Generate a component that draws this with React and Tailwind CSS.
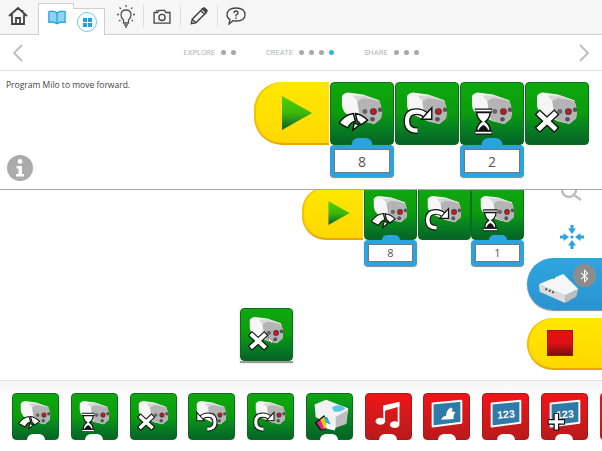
import { useId } from "react";

const Motor = () => (
  <g>
    <path d="M11 14 Q12 11 17 10 L33 12 L50 18 L53 28 L52 37 L45 43 L33 40 L15 32 Q11 28 11 22Z" fill="#f6f6f6" />
    <path d="M27 19 L33 14 L50 19 L53 28 L52 37 L45 43 L31 39 Q28 30 27 19Z" fill="#b4b4b4" />
    <path d="M22 13 L34 13 L49 18 L33 16 L27 19Z" fill="#d6d6d6" />
    <circle cx="35" cy="30" r="2.6" fill="#666" />
    <circle cx="44" cy="30" r="3.6" fill="#3c3c3c" />
    <circle cx="44" cy="30" r="2.5" fill="#e0101a" />
    <circle cx="51" cy="28" r="2.4" fill="#555" />
    <circle cx="43" cy="38" r="2.4" fill="#555" />
  </g>
);

const Outlined = ({ d, w = 5, cap = "square" }) => (
  <g fill="none" strokeLinecap={cap} strokeLinejoin="miter">
    <path d={d} stroke="#111" strokeWidth={w + 2.8} />
    <path d={d} stroke="#fff" strokeWidth={w} />
  </g>
);

const Gauge = () => (
  <g stroke="#111" strokeWidth="1.5" fill="#fff" strokeLinejoin="round">
    <path d="M8 42 Q14 33 23 32 L25 40 Q20 41 17 47Z" />
    <path d="M25 32 Q32 33 38 39 L31 44 Q29 41 27 40Z" />
    <path d="M24 42 L29 44 L22 50Z" />
  </g>
);

const RotateCw = () => (
  <g>
    <Outlined d="M22 50 Q11 50 11 40 Q11 30 21 30 Q27 30 31 34" w={4.4} cap="butt" />
    <path d="M37 26 V38 H26Z" fill="#fff" stroke="#111" strokeWidth="1.5" />
  </g>
);

const Hourglass = () => (
  <g>
    <path d="M14 29 H32 M14 52 H32" stroke="#111" strokeWidth="4.4" />
    <path d="M14.5 29 H31.5 M14.5 52 H31.5" stroke="#fff" strokeWidth="1.8" />
    <path d="M16 31 H30 Q30 37 25 40.5 Q30 44 30 50 H16 Q16 44 21 40.5 Q16 37 16 31Z" fill="#fff" stroke="#111" strokeWidth="1.5" />
    <path d="M17.5 50 Q20 45 23 44 Q26 45 28.5 50Z" fill="#111" />
  </g>
);

const Cross = () => <Outlined d="M14 33 L29 47 M29 33 L14 47" w={5} />;

const overlays = {
  gauge: <Gauge />,
  cw: <RotateCw />,
  ccw: <g transform="translate(48 0) scale(-1 1)"><RotateCw /></g>,
  hourglass: <Hourglass />,
  cross: <Cross />,
};

const MotorBlock = ({ icon, size, bump }) => (
  <div className={`relative shrink-0 rounded-sm border border-[#0b6b1e] bg-gradient-to-b from-[#0fa80f] via-[#0a9c0c] to-[#056326] ${size}`}>
    <svg viewBox="0 0 64 64" className="absolute inset-0 h-full w-full">
      <Motor />
      {overlays[icon]}
    </svg>
    {bump && <div className="absolute bottom-[-1px] left-1/2 h-[6px] w-[18px] -translate-x-1/2 rounded-t-full bg-white" />}
  </div>
);

const YellowPill = ({ className, children }) => (
  <div className={`border-b-2 border-[#e8a800] bg-gradient-to-b from-[#ffe800] to-[#ffd800] shadow-[inset_2px_0_0_#f3c200] ${className}`}>
    {children}
  </div>
);

const Play = ({ className }) => {
  const id = useId();
  return (
    <svg viewBox="0 0 30 34" className={className}>
      <defs>
        <linearGradient id={id} x1="0" y1="0" x2="0" y2="1">
          <stop offset="0" stopColor="#4fd000" />
          <stop offset="0.5" stopColor="#3cb808" />
          <stop offset="1" stopColor="#0a5f2a" />
        </linearGradient>
      </defs>
      <path d="M0 0 L30 17 L0 34Z" fill={`url(#${id})`} />
    </svg>
  );
};

const Param = ({ value, size, text, tab }) => (
  <div className={`relative shrink-0 rounded-sm bg-[#2aa3df] p-[4px] shadow-[0_1px_1px_#888] ${size}`}>
    <div className={`absolute left-1/2 -translate-x-1/2 rounded-t-full bg-[#2aa3df] ${tab}`} />
    <div className={`flex h-full items-center justify-center border border-[#777] bg-white font-['Open_Sans',sans-serif] text-[#555] ${text}`}>
      {value}
    </div>
  </div>
);

const RedBlock = ({ children }) => (
  <div className="relative h-[47px] w-[47px] shrink-0 rounded-sm border border-[#a81a1a] bg-gradient-to-b from-[#f01418] to-[#b81a1c]">
    <svg viewBox="0 0 47 47" className="absolute inset-0 h-full w-full">{children}</svg>
    <div className="absolute bottom-[-1px] left-1/2 h-[6px] w-[18px] -translate-x-1/2 rounded-t-full bg-white" />
  </div>
);

const Screen = ({ children }) => (
  <g>
    <path d="M9 10 L39 7 L39 30 L9 34Z" fill="#2f7ba8" stroke="#fff" strokeWidth="2" strokeLinejoin="round" />
    {children}
  </g>
);

const Num = () => (
  <text x="24" y="25" textAnchor="middle" fontSize="11" fontWeight="700" fill="#fff" fontFamily="Liberation Sans, sans-serif" transform="rotate(-5 24 22)">
    123
  </text>
);

const Dots = ({ count, active }) => (
  <div className="flex gap-[5px]">
    {Array.from({ length: count }).map((_, i) => (
      <span key={i} className={`h-[5px] w-[5px] rounded-full ${i === active ? "bg-[#2fb4e0]" : "bg-[#a8a8a8]"}`} />
    ))}
  </div>
);

const Step = ({ label, count, active, className }) => (
  <div className={`flex items-center gap-[6px] ${className}`}>
    <span className="text-[7.5px] text-[#b4b4b4]">{label}</span>
    <Dots count={count} active={active} />
  </div>
);

const Divider = () => <div className="h-[22px] w-px shrink-0 bg-[#dddddd]" />;

const App = () => {
  return (
    <div className="flex h-[451px] w-[602px] flex-col overflow-hidden bg-white font-['Roboto',sans-serif]">
      {/* Top toolbar */}
      <header className="flex h-[35px] shrink-0 items-end border-b border-[#cfcfcf] bg-[#f6f6f6] pl-[8px]">
        <svg viewBox="0 0 20 20" className="mb-[8px] h-[20px] w-[20px] shrink-0" fill="none" stroke="#444" strokeWidth="1.8">
          <path d="M1 10 L10 2 L19 10 M4 8.5 V18 H16 V8.5 M8 18 V12 H12 V18 M14.5 4 V7" />
        </svg>
        {/* Active tab steps down halfway across */}
        <div className="relative z-10 mb-[-1px] ml-[10px] flex shrink-0 items-end">
          <div className="h-[32px] w-[36px] border border-b-0 border-[#cfcfcf] bg-white pl-[9px] pt-[6px]">
            <svg viewBox="0 0 20 16" className="h-[15px] w-[18px]" fill="#8fd4f2" stroke="#22a3e0" strokeWidth="1.4">
              <path d="M10 3 Q6 0 1 1.5 V13.5 Q6 12 10 15 Q14 12 19 13.5 V1.5 Q14 0 10 3Z M10 3 V15" />
            </svg>
          </div>
          <div className="ml-[-1px] h-[27px] w-[32px] border-r border-t border-[#cfcfcf] bg-white pl-[4px] pt-[3px]">
            <div className="relative z-10 grid h-[20px] w-[20px] grid-cols-[4px_4px] place-content-center gap-[1px] rounded-full border border-[#6ccbf0] bg-white">
              <span className="h-[4px] w-[4px] bg-[#1f9fe0]" />
              <span className="h-[4px] w-[4px] bg-[#1f9fe0]" />
              <span className="h-[4px] w-[4px] bg-[#1f9fe0]" />
              <span className="h-[4px] w-[4px] bg-[#1f9fe0]" />
            </div>
          </div>
        </div>
        <div className="flex h-[34px] items-center pb-[2px]">
          <svg viewBox="0 0 20 24" className="ml-[11px] h-[24px] w-[20px]" fill="none" stroke="#555" strokeWidth="1.3">
            <path d="M10 6 Q5 6 5 11 Q5 14 7.5 16 V19 H12.5 V16 Q15 14 15 11 Q15 6 10 6Z M8 21 H12 M9 23 H11" />
            <path d="M10 1 V3.5 M3.5 3.5 L5 5 M16.5 3.5 L15 5 M1 10.5 H3 M17 10.5 H19 M3 17 L4.5 16 M17 17 L15.5 16" strokeDasharray="2 0.6" />
          </svg>
          <div className="ml-[7px]"><Divider /></div>
          <svg viewBox="0 0 20 17" className="ml-[9px] h-[15px] w-[18px]" fill="none" stroke="#444" strokeWidth="1.5">
            <path d="M1 4 H5 L6.5 1.5 H13 L14.5 4 H19 V16 H1Z" />
            <circle cx="10" cy="9.5" r="3.5" />
            <path d="M3 2 H5" />
          </svg>
          <div className="ml-[9px]"><Divider /></div>
          <svg viewBox="0 0 20 20" className="ml-[9px] h-[18px] w-[18px]" fill="none" stroke="#444" strokeWidth="1.6">
            <path d="M1.5 18.5 L2.5 13.5 L14 2 L18 6 L6.5 17.5Z M12 4 L16 8 M2.5 13.5 L6.5 17.5" />
            <path d="M14 2 L18 6 L19 4 L16 1Z" fill="#444" />
          </svg>
          <div className="ml-[9px]"><Divider /></div>
          <svg viewBox="0 0 20 18" className="ml-[8px] h-[18px] w-[20px]" fill="none" stroke="#444" strokeWidth="1.3">
            <path d="M10 1 Q19 1 19 8 Q19 14 10 14 Q8 14 7 13.7 L3 17 L4 12.5 Q1 11 1 8 Q1 1 10 1Z" />
            <path d="M8 6 Q8 4 10 4 Q12 4 12 6 Q12 7.4 10 8 V9.5 M10 10.5 V12" />
          </svg>
        </div>
      </header>

      {/* Step navigation */}
      <nav className="flex h-[36px] shrink-0 items-center justify-between border-b border-[#e2e2e2] px-[12px]">
        <svg viewBox="0 0 11 18" className="h-[18px] w-[11px]" fill="none" stroke="#bdbdbd" strokeWidth="1.8">
          <path d="M10 1 L2 9 L10 17" />
        </svg>
        <div className="flex items-center">
          <Step label="EXPLORE" count={2} />
          <Step label="CREATE" count={4} active={3} className="ml-[30px]" />
          <Step label="SHARE" count={3} className="ml-[30px]" />
        </div>
        <svg viewBox="0 0 11 18" className="h-[18px] w-[11px]" fill="none" stroke="#bdbdbd" strokeWidth="1.8">
          <path d="M1 1 L9 9 L1 17" />
        </svg>
      </nav>

      {/* Goal panel */}
      <section className="relative flex h-[119px] shrink-0 justify-between border-b border-[#a9a9a9]">
        <p className="pl-[6px] pt-[8px] font-['Open_Sans',sans-serif] text-[8.5px] text-[#444]">Program Milo to move forward.</p>
        <div className="absolute bottom-[8px] left-[7px] flex h-[26px] w-[26px] items-center justify-center rounded-full bg-[#ababab]">
          <svg viewBox="0 0 10 18" className="h-[18px] w-[10px]" fill="#fff">
            <circle cx="5" cy="2.4" r="2.4" />
            <path d="M1.5 7 H7 V15 H9 V17.5 H1 V15 H3.5 V9.5 H1.5Z" />
          </svg>
        </div>
        <div className="flex items-start pr-[12px] pt-[11px]">
          <YellowPill className="relative mr-px flex h-[63px] w-[75px] items-center rounded-l-[28px] pl-[28px]">
            <Play className="h-[34px] w-[30px]" />
          </YellowPill>
          {[
            { icon: "gauge", value: "8" },
            { icon: "cw" },
            { icon: "hourglass", value: "2" },
            { icon: "cross" },
          ].map((b) => (
            <div key={b.icon} className="mr-px flex w-[64px] flex-col">
              <MotorBlock icon={b.icon} size="h-[63px] w-[64px]" />
              {b.value && <Param value={b.value} size="h-[32px] w-[64px]" text="text-[14px]" tab="top-[-7px] h-[7px] w-[21px]" />}
            </div>
          ))}
        </div>
      </section>

      {/* Programming canvas */}
      <main className="relative flex-1 overflow-hidden bg-white">
        {/* Chain runs a little above the fold of the panel */}
        <div className="absolute left-[302px] top-[-3px] flex items-start">
          <YellowPill className="mr-px flex h-[53px] w-[61px] items-center rounded-l-[24px] pl-[25px]">
            <Play className="h-[24px] w-[24px]" />
          </YellowPill>
          {[
            { icon: "gauge", value: "8" },
            { icon: "cw" },
            { icon: "hourglass", value: "1" },
          ].map((b) => (
            <div key={b.icon} className="mr-[0.5px] flex w-[53px] flex-col">
              <MotorBlock icon={b.icon} size="h-[53px] w-[53px]" />
              {b.value && <Param value={b.value} size="h-[26px] w-[53px]" text="text-[11px]" tab="top-[-5px] h-[5px] w-[18px]" />}
            </div>
          ))}
        </div>

        <div className="absolute left-[240px] top-[118px] shadow-[0_2px_1px_#999]">
          <MotorBlock icon="cross" size="h-[53px] w-[53px]" />
          <svg viewBox="0 0 6 8" className="absolute left-[28px] top-[28px] h-[8px] w-[6px]" fill="#fff" stroke="#555" strokeWidth="0.5">
            <path d="M0.5 0.5 V6.5 L2 5 L3.5 7.5 L5.5 4.5 L3 4Z" />
          </svg>
        </div>

        <svg viewBox="0 0 24 12" className="absolute left-[560px] top-0 h-[12px] w-[24px]" fill="none" stroke="#bdbdbd" strokeWidth="2.4">
          <circle cx="9" cy="0" r="7" />
          <path d="M14 5 L21 10" />
        </svg>

        <svg viewBox="0 0 24 24" className="absolute left-[560px] top-[35px] h-[24px] w-[24px]" fill="#2aa3df">
          <circle cx="12" cy="12" r="1.6" />
          <path id="move-arrow" d="M10.5 0 H13.5 V3.5 H16 L12 9 L8 3.5 H10.5Z" />
          <path d="M10.5 0 H13.5 V3.5 H16 L12 9 L8 3.5 H10.5Z" transform="rotate(90 12 12)" />
          <path d="M10.5 0 H13.5 V3.5 H16 L12 9 L8 3.5 H10.5Z" transform="rotate(180 12 12)" />
          <path d="M10.5 0 H13.5 V3.5 H16 L12 9 L8 3.5 H10.5Z" transform="rotate(270 12 12)" />
        </svg>

        <div className="absolute left-[527px] top-[68px] h-[52px] w-[75px] rounded-l-full bg-gradient-to-b from-[#2da6df] to-[#2a93cf] shadow-[0_1px_1px_#888]">
          <svg viewBox="0 0 43 33" className="absolute left-[11px] top-[14px] h-[31px] w-[42px]">
            <path d="M0 13 L26 2 L42 18 L28 25Z" fill="#f6f6f6" />
            <path d="M0 13 L28 25 L28 33 L1 21Z" fill="#dcdcdc" />
            <path d="M28 25 L42 18 L40 26 L28 33Z" fill="#bdbdbd" />
            <circle cx="16" cy="6" r="1.3" fill="#2ca44c" />
            <path d="M7 18 L16 22" stroke="#444" strokeWidth="2" strokeDasharray="2 2" />
          </svg>
          <div className="absolute left-[46px] top-[6px] flex h-[23px] w-[23px] items-center justify-center rounded-full bg-[#8c8c8c]">
            <svg viewBox="0 0 10 16" className="h-[14px] w-[9px]" fill="none" stroke="#fff" strokeWidth="1.2">
              <path d="M1 4.5 L8.5 11 L5 14.5 V1.5 L8.5 5 L1 11.5" />
            </svg>
          </div>
        </div>

        <YellowPill className="absolute left-[527px] top-[128px] flex h-[52px] w-[75px] items-center rounded-l-full pl-[20px]">
          <div className="h-[26px] w-[26px] border border-[#a01515] bg-gradient-to-b from-[#e01014] from-50% to-[#7c0d10]" />
        </YellowPill>
      </main>

      {/* Block palette */}
      <footer className="flex h-[71px] shrink-0 gap-[11.75px] overflow-hidden border-t border-[#e4e4e4] bg-gradient-to-b from-[#f4f4f4] to-white to-[22%] pl-[12px] pt-[12px]">
        <MotorBlock icon="gauge" size="h-[47px] w-[47px]" bump />
        <MotorBlock icon="hourglass" size="h-[47px] w-[47px]" bump />
        <MotorBlock icon="cross" size="h-[47px] w-[47px]" />
        <MotorBlock icon="ccw" size="h-[47px] w-[47px]" />
        <MotorBlock icon="cw" size="h-[47px] w-[47px]" />

        <div className="relative h-[47px] w-[47px] shrink-0 rounded-sm border border-[#0b6b1e] bg-gradient-to-b from-[#0fa80f] to-[#056326]">
          <svg viewBox="0 0 47 47" className="absolute inset-0 h-full w-full">
            <path d="M8 11 L20 6 L43 15 L41 31 L30 35 L9 24Z" fill="#f2f2f2" />
            <path d="M26 14 Q34 9 40 15 Q36 20 28 18Z" fill="#5cc4e8" />
            <path d="M30 24 L42 17 L41 31 L30 35Z" fill="#bdbdbd" />
            <path d="M8 30 L18 22 L24 36 L14 38Z" fill="#111" />
            <path d="M10 30 L18 24 L20 36 L15 37Z" fill="#e0219a" />
            <path d="M14 27 L18 24 L22 34 L18 36Z" fill="#f5c800" />
            <path d="M18 24 L21 24 L25 32 L21 35Z" fill="#27a9e0" />
            <path d="M20 30 L30 34 L29 38 L20 36Z" fill="#fff" />
          </svg>
          <div className="absolute bottom-[-1px] left-1/2 h-[6px] w-[18px] -translate-x-1/2 rounded-t-full bg-white" />
        </div>

        <RedBlock>
          <path d="M19 13 V28 M34 10 V31" stroke="#fff" strokeWidth="1.8" />
          <path d="M18 12 L35 8 V13 L18 18Z" fill="#fff" />
          <ellipse cx="15" cy="28.5" rx="5" ry="3.6" fill="#fff" />
          <ellipse cx="30" cy="32" rx="5" ry="3.6" fill="#fff" />
        </RedBlock>
        <RedBlock>
          <Screen>
            <path d="M18 27 Q19 23 23 23 Q23 17 28 14 Q31 15 29 18 L33 19 Q30 22 31 26Z" fill="#fff" />
          </Screen>
        </RedBlock>
        <RedBlock>
          <Screen><Num /></Screen>
        </RedBlock>
        <RedBlock>
          <Screen><Num /></Screen>
          <path d="M15 20 V38 M6 29 H24" stroke="#111" strokeWidth="6" />
          <path d="M15 21 V37 M7 29 H23" stroke="#fff" strokeWidth="3.4" />
        </RedBlock>
        <div className="h-[47px] w-[47px] shrink-0 rounded-sm bg-gradient-to-b from-[#f01418] to-[#b81a1c]" />
      </footer>
    </div>
  );
};

export default App;
